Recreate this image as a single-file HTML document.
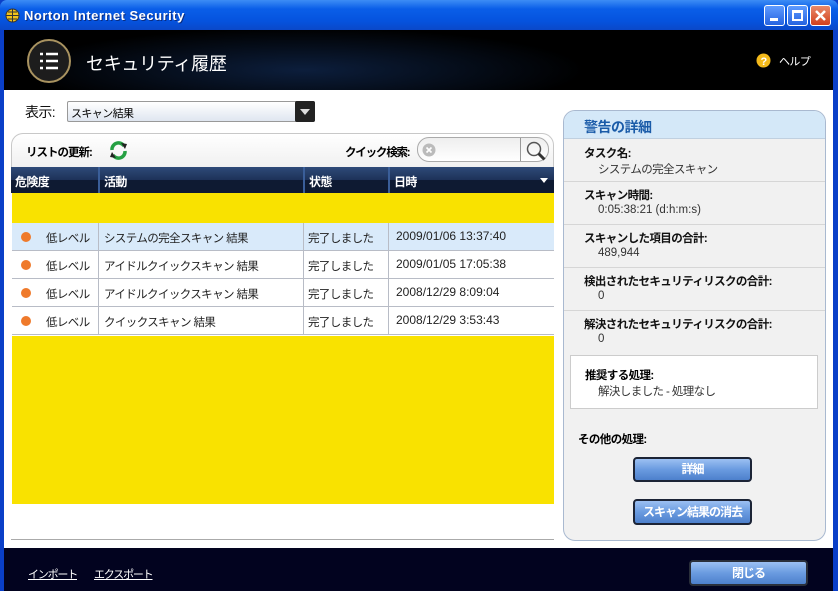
<!DOCTYPE html>
<html><head><meta charset="utf-8"><style>
*{margin:0;padding:0;box-sizing:border-box}
body{width:838px;height:591px;overflow:hidden;background:#0a3fc8;font-family:"Liberation Sans","Noto Sans CJK JP",sans-serif;font-size:11px;letter-spacing:-0.6px;position:relative}
.a{position:absolute;white-space:nowrap}
.title{left:0;top:0;width:838px;height:30px;background:linear-gradient(#3d8df5,#0a5ee8 30%,#0553de 70%,#0a48c8);border-radius:7px 7px 0 0}
.title span{position:absolute;left:24px;top:8px;color:#fff;font-weight:bold;font-size:13px;letter-spacing:.5px;text-shadow:1px 1px #0a2c80}
.wb{top:5px;width:21px;height:21px;border:1px solid #fff;border-radius:3px;background:linear-gradient(#5e9bff,#2563e0)}
.hdr{left:4px;top:30px;width:829px;height:60px;background:radial-gradient(ellipse 400px 60px at 300px 40px,#0c1e3c,#000 70%)}
.main{left:4px;top:90px;width:829px;height:458px;background:#fff}
.foot{left:4px;top:548px;width:829px;height:43px;background:#02031f}
.row{position:absolute;left:12px;width:542px;height:28px;border-bottom:1px solid #b8bcc6;font-size:11.5px;color:#222}
.row div{position:absolute;top:7px}
.row .d{letter-spacing:0;font-size:12px;top:6px}
.dot{left:9px;top:9px!important;width:10px;height:10px;border-radius:50%;background:#ef7a2b}
.vl{position:absolute;top:0;width:1px;height:28px;background:#b8bcc6}
.sec{position:absolute;left:564px;width:261px;border-bottom:1px solid #d6d6d6}
.sec b{position:absolute;left:20px;font-size:11.5px;color:#111;white-space:nowrap}
.sec i{position:absolute;left:34px;font-style:normal;font-size:11.5px;color:#333;white-space:nowrap}
.btn{border:2px solid #1c2436;border-radius:4px;background:linear-gradient(#9cc0f2,#6a9be0 50%,#4d80cc);color:#fff;font-weight:bold;text-align:center;font-size:12px;letter-spacing:-1px}
</style></head><body>
<div class="a title"><svg class="a" style="left:5px;top:8px" width="15" height="15"><circle cx="7.5" cy="7.5" r="6.5" fill="#f2c21a" stroke="#333"/><path d="M1 7.5h13M7.5 1v13M3 4h9M3 11h9" stroke="#333"/></svg><span>Norton Internet Security</span>
<div class="a wb" style="left:764px"><div class="a" style="left:5px;top:12px;width:8px;height:3px;background:#fff"></div></div>
<div class="a wb" style="left:787px"><div class="a" style="left:4px;top:4px;width:11px;height:11px;border:2px solid #fff;border-top-width:3px"></div></div>
<div class="a wb" style="left:810px;background:linear-gradient(#e98a6a,#d2401c)"><svg width="19" height="19"><path d="M5 5l9 9M14 5l-9 9" stroke="#fff" stroke-width="2.5"/></svg></div>
</div>
<div class="a hdr"></div>
<svg class="a" style="left:26px;top:38px" width="46" height="46"><circle cx="23" cy="23" r="21" fill="#1d1d1d" stroke="#a99360" stroke-width="2"/><path d="M14 16h3M20 16h12M14 23h3M20 23h12M14 30h3M20 30h12" stroke="#fff" stroke-width="2.5"/></svg>
<div class="a" style="left:86px;top:50px;color:#fff;font-size:18px;letter-spacing:-0.3px">セキュリティ履歴</div>
<svg class="a" style="left:756px;top:53px" width="15" height="15"><circle cx="7.5" cy="7.5" r="7" fill="#f3b91a"/><text x="4.5" y="12" font-size="11" font-weight="bold" fill="#fff" font-family="Liberation Sans">?</text></svg>
<div class="a" style="left:779px;top:53px;color:#fff;font-size:11px">ヘルプ</div>
<div class="a main"></div>
<div class="a" style="left:25px;top:102px;font-size:14px;color:#111">表示:</div>
<div class="a" style="left:67px;top:101px;width:248px;height:21px;border:1px solid #999;border-radius:2px;background:linear-gradient(#fff,#dfe6f0);font-size:11px;padding:3px 3px">スキャン結果</div>
<div class="a" style="left:295px;top:101px;width:20px;height:21px;background:#222;border-radius:2px"><div class="a" style="left:5px;top:8px;border:5px solid transparent;border-top:6px solid #ddd"></div></div>
<div class="a" style="left:11px;top:133px;width:543px;height:35px;border:1px solid #c8c8c8;border-bottom:none;border-radius:12px 12px 0 0;background:linear-gradient(#fff,#f0f0f0)"></div>
<div class="a" style="left:26px;top:144px;font-weight:bold;font-size:11.5px;letter-spacing:-1px">リストの更新:</div>
<svg class="a" style="left:108px;top:140px" width="21" height="21"><path d="M4 10A6.5 6.5 0 0 1 16 6" fill="none" stroke="#25a043" stroke-width="3.5"/><path d="M17 11A6.5 6.5 0 0 1 5 15" fill="none" stroke="#25a043" stroke-width="3.5"/><path d="M13 3l6 1-2 5z" fill="#222"/><path d="M8 18l-6-1 2-5z" fill="#222"/></svg>
<div class="a" style="left:345px;top:144px;font-weight:bold;font-size:11.5px;letter-spacing:-1.2px">クイック検索:</div>
<div class="a" style="left:417px;top:137px;width:132px;height:25px;border:1px solid #aaa;border-radius:12px;background:linear-gradient(#eee,#fff)"></div>
<div class="a" style="left:520px;top:138px;width:1px;height:23px;background:#999"></div>
<svg class="a" style="left:422px;top:143px" width="14" height="14"><circle cx="7" cy="7" r="6.5" fill="#bbb"/><path d="M4.5 4.5l5 5M9.5 4.5l-5 5" stroke="#fff" stroke-width="1.6"/></svg>
<svg class="a" style="left:525px;top:140px" width="22" height="22"><circle cx="9" cy="9" r="6.5" fill="none" stroke="#555" stroke-width="1.5"/><path d="M13.5 13.5l6 6" stroke="#333" stroke-width="3"/></svg>
<div class="a" style="left:11px;top:167px;width:543px;height:26px;background:linear-gradient(#2e4a78 0,#1d3158 50%,#0e1a32 51%,#0e1a32);color:#fff;font-weight:bold;font-size:12px">
<div class="a" style="left:4px;top:6px">危険度</div><div class="a" style="left:87px;top:0;width:2px;height:26px;background:#3a5e99"></div>
<div class="a" style="left:93px;top:6px">活動</div><div class="a" style="left:292px;top:0;width:2px;height:26px;background:#3a5e99"></div>
<div class="a" style="left:298px;top:6px">状態</div><div class="a" style="left:377px;top:0;width:2px;height:26px;background:#3a5e99"></div>
<div class="a" style="left:383px;top:6px">日時</div><div class="a" style="left:529px;top:11px;border:4px solid transparent;border-top:5px solid #fff"></div>
</div>
<div class="a" style="left:12px;top:193px;width:542px;height:30px;background:#f9e200"></div>
<div class="row" style="top:223px;background:#d9eafa"><div class="dot"></div><div style="left:34px">低レベル</div><span class="vl" style="left:86px"></span><div style="left:92px">システムの完全スキャン 結果</div><span class="vl" style="left:291px"></span><div style="left:296px">完了しました</div><span class="vl" style="left:376px"></span><div class="d" style="left:384px">2009/01/06 13:37:40</div></div>
<div class="row" style="top:251px"><div class="dot"></div><div style="left:34px">低レベル</div><span class="vl" style="left:86px"></span><div style="left:92px">アイドルクイックスキャン 結果</div><span class="vl" style="left:291px"></span><div style="left:296px">完了しました</div><span class="vl" style="left:376px"></span><div class="d" style="left:384px">2009/01/05 17:05:38</div></div>
<div class="row" style="top:279px"><div class="dot"></div><div style="left:34px">低レベル</div><span class="vl" style="left:86px"></span><div style="left:92px">アイドルクイックスキャン 結果</div><span class="vl" style="left:291px"></span><div style="left:296px">完了しました</div><span class="vl" style="left:376px"></span><div class="d" style="left:384px">2008/12/29 8:09:04</div></div>
<div class="row" style="top:307px"><div class="dot"></div><div style="left:34px">低レベル</div><span class="vl" style="left:86px"></span><div style="left:92px">クイックスキャン 結果</div><span class="vl" style="left:291px"></span><div style="left:296px">完了しました</div><span class="vl" style="left:376px"></span><div class="d" style="left:384px">2008/12/29 3:53:43</div></div>
<div class="a" style="left:12px;top:336px;width:542px;height:168px;background:#f9e200"></div>
<div class="a" style="left:11px;top:539px;width:543px;height:1px;background:#aaa"></div>
<div class="a" style="left:563px;top:110px;width:263px;height:431px;border:1px solid #a9b9d0;border-radius:12px;background:#f1f1f1"></div>
<div class="a" style="left:564px;top:111px;width:261px;height:28px;border-radius:11px 11px 0 0;background:#d4e8f8;border-bottom:1px solid #c0d0e0"></div>
<div class="a" style="left:584px;top:117px;color:#1a5ba8;font-weight:bold;font-size:14px;letter-spacing:-0.5px">警告の詳細</div>
<div class="sec" style="top:139px;height:43px"><b style="top:6px">タスク名:</b><i style="top:22px">システムの完全スキャン</i></div>
<div class="sec" style="top:182px;height:43px"><b style="top:5px">スキャン時間:</b><i style="top:22px;letter-spacing:0">0:05:38:21 (d:h:m:s)</i></div>
<div class="sec" style="top:225px;height:43px"><b style="top:5px">スキャンした項目の合計:</b><i style="top:22px;letter-spacing:0">489,944</i></div>
<div class="sec" style="top:268px;height:43px"><b style="top:5px">検出されたセキュリティリスクの合計:</b><i style="top:22px">0</i></div>
<div class="sec" style="top:311px;height:43px;border:none"><b style="top:5px">解決されたセキュリティリスクの合計:</b><i style="top:22px">0</i></div>
<div class="a" style="left:570px;top:355px;width:248px;height:54px;background:#fff;border:1px solid #ccc"></div>
<div class="a" style="left:585px;top:367px;font-weight:bold;font-size:11.5px">推奨する処理:</div>
<div class="a" style="left:598px;top:383px;color:#333;font-size:11.5px">解決しました - 処理なし</div>
<div class="a" style="left:578px;top:431px;font-weight:bold;font-size:11.5px">その他の処理:</div>
<div class="a btn" style="left:633px;top:457px;width:119px;height:25px;line-height:21px">詳細</div>
<div class="a btn" style="left:633px;top:499px;width:119px;height:26px;line-height:22px">スキャン結果の消去</div>
<div class="a foot"></div>
<div class="a" style="left:28px;top:566px;color:#fff;text-decoration:underline;font-size:11px;letter-spacing:-1.2px">インポート</div>
<div class="a" style="left:94px;top:566px;color:#fff;text-decoration:underline;font-size:11px;letter-spacing:-1.2px">エクスポート</div>
<div class="a btn" style="left:689px;top:560px;width:119px;height:26px;line-height:22px;border-color:#2a2f3a">閉じる</div>
</body></html>
